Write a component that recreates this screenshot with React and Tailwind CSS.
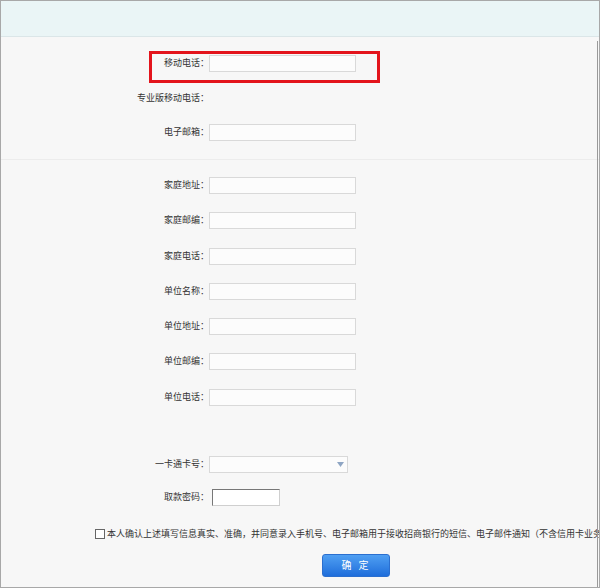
import React from 'react'

const font = { fontFamily: '"Liberation Sans", "Noto Sans CJK SC", sans-serif' }

function Row({ label, mt, children }) {
  return (
    <div className={`flex items-center h-[17px] ${mt}`}>
      <div className="w-[208px] text-right text-[9px] text-[#333] leading-none">{label}：</div>
      <div className="flex items-center">{children}</div>
    </div>
  )
}

function Field() {
  return <div className="w-[147px] h-[17px] bg-[#fcfcfc] border border-[#d9d9d9]" />
}

export default function App() {
  return (
    <div style={font} className="relative w-[600px] h-[588px] overflow-hidden bg-[#f7f7f7] border border-[#a8a8a8]">
      <div className="h-[36px] bg-[#eaf5f6] border-b border-[#dbe6e8]" />
      <div className="absolute right-[1px] top-[40px] bottom-0 w-px bg-[#9a9a9a]" />

      <Row label="移动电话" mt="mt-[18px]"><Field /></Row>
      <Row label="专业版移动电话" mt="mt-[18px]" />
      <Row label="电子邮箱" mt="mt-[17px]"><Field /></Row>

      <div className="mt-[18px] h-px bg-[#ececec]" />

      <Row label="家庭地址" mt="mt-[17px]"><Field /></Row>
      <Row label="家庭邮编" mt="mt-[18px]"><Field /></Row>
      <Row label="家庭电话" mt="mt-[19px]"><Field /></Row>
      <Row label="单位名称" mt="mt-[18px]"><Field /></Row>
      <Row label="单位地址" mt="mt-[18px]"><Field /></Row>
      <Row label="单位邮编" mt="mt-[18px]"><Field /></Row>
      <Row label="单位电话" mt="mt-[19px]"><Field /></Row>

      <Row label="一卡通卡号" mt="mt-[50px]">
        <div className="relative w-[139px] h-[17px] bg-[#fcfcfc] border border-[#d9d9d9]">
          <svg className="absolute right-[3px] top-[5px]" width="7" height="5" viewBox="0 0 7 5">
            <path d="M0 0H7L3.5 5Z" fill="#8fa6c4" />
          </svg>
        </div>
      </Row>
      <Row label="取款密码" mt="mt-[16px]">
        <div className="ml-[3px] w-[68px] h-[17px] bg-white border border-[#cfcfcf] border-t-[#777] border-l-[#777]" />
      </Row>

      <div className="mt-[23px] flex items-center pl-[94px] whitespace-nowrap text-[9px] text-[#333] leading-none">
        <span className="w-[10px] h-[10px] border border-[#666] bg-white mr-[2px] shrink-0" />
        本人确认上述填写信息真实、准确，并同意录入手机号、电子邮箱用于接收招商银行的短信、电子邮件通知（不含信用卡业务）
      </div>

      <div className="mt-[15px] flex justify-center pl-[112px]">
        <button className="w-[68px] h-[23px] rounded-[3px] bg-gradient-to-b from-[#4f9ff2] to-[#1f6edb] border border-[#2b6fcf] text-white text-[10px] tracking-[2px]">
          确 定
        </button>
      </div>

      <div className="absolute left-[148px] top-[50px] w-[231px] h-[32px] border-[3px] border-[#e3141c]" />
    </div>
  )
}
